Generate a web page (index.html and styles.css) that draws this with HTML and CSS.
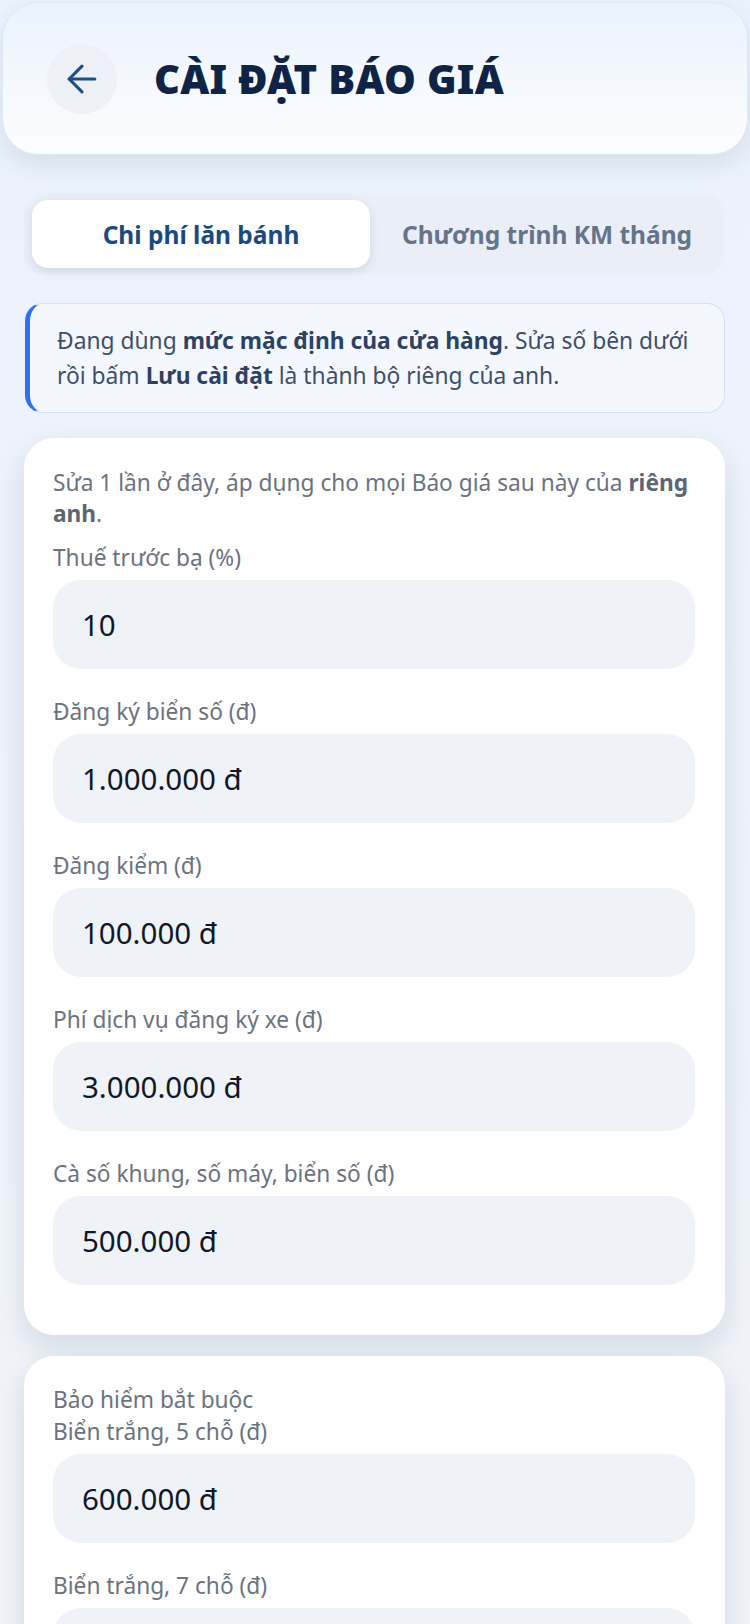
FILE: index.html
```html
<!DOCTYPE html>
<html lang="vi">
<head>
<meta charset="utf-8">
<meta name="viewport" content="width=750">
<title>Cài đặt báo giá</title>
<link rel="stylesheet" href="styles.css">
</head>
<body>
<header class="topbar">
  <button class="back" aria-label="Quay lại">
    <svg viewBox="0 0 24 24" width="44" height="44" fill="none" stroke="currentColor" stroke-width="1.7" stroke-linecap="round" stroke-linejoin="round"><path d="m12 19-7-7 7-7"/><path d="M19 12H5"/></svg>
  </button>
  <h1 class="title">CÀI ĐẶT BÁO GIÁ</h1>
</header>
<main class="content">
  <div class="tabs">
    <button class="tab active">Chi phí lăn bánh</button>
    <button class="tab">Chương trình KM tháng</button>
  </div>
  <div class="notice">
    Đang dùng <b>mức mặc định của cửa hàng</b>. Sửa số bên dưới rồi bấm <b>Lưu cài đặt</b> là thành bộ riêng của anh.
  </div>
  <section class="card card-first">
    <p class="hint">Sửa 1 lần ở đây, áp dụng cho mọi Báo giá sau này của <b>riêng anh</b>.</p>
    <div class="field"><label class="label">Thuế trước bạ (%)</label><div class="input">10</div></div>
    <div class="field"><label class="label">Đăng ký biển số (đ)</label><div class="input">1.000.000 đ</div></div>
    <div class="field"><label class="label">Đăng kiểm (đ)</label><div class="input">100.000 đ</div></div>
    <div class="field"><label class="label">Phí dịch vụ đăng ký xe (đ)</label><div class="input">3.000.000 đ</div></div>
    <div class="field"><label class="label">Cà số khung, số máy, biển số (đ)</label><div class="input">500.000 đ</div></div>
  </section>
  <section class="card">
    <div class="field"><label class="label">Bảo hiểm bắt buộc<br>Biển trắng, 5 chỗ (đ)</label><div class="input">600.000 đ</div></div>
    <div class="field"><label class="label">Biển trắng, 7 chỗ (đ)</label><div class="input">900.000 đ</div></div>
  </section>
</main>
</body>
</html>
```
FILE: styles.css
```css
* { box-sizing: border-box; }
html, body { margin: 0; padding: 0; }
body {
  font-family: "Noto Sans", "Open Sans", sans-serif;
  background: linear-gradient(180deg, #ebf2fc 0%, #eef3fa 40%, #f0f3f8 100%);
  min-height: 1624px;
  color: #111827;
}
.topbar {
  margin: 2px 2px 0;
  height: 153px;
  border-radius: 36px;
  background: linear-gradient(180deg, #eaf2fd 0%, #f6f9fe 60%, #fcfdff 100%);
  border: 1px solid #dde6f2;
  box-shadow: 0 10px 24px rgba(30, 60, 110, 0.10);
  display: flex;
  align-items: center;
  padding: 0 0 0 44px;
  gap: 37px;
}
.back {
  width: 70px;
  height: 70px;
  border-radius: 50%;
  border: 0;
  background: #edf1f7;
  color: #1d4f85;
  display: flex;
  align-items: center;
  justify-content: center;
  padding: 0;
  margin-top: 1px;
}
.title {
  margin: 0;
  font-size: 40px;
  font-weight: 900;
  color: #0f2444;
  letter-spacing: 0.3px;
}
.content {
  padding: 38px 25px 0 24px;
}
.tabs {
  display: grid;
  grid-template-columns: 1fr 1fr;
  gap: 8px;
  padding: 7px 8px;
  border-radius: 20px;
  background: #eaeff7;
  margin-right: 1px;
}
.tab {
  height: 68px;
  border: 0;
  border-radius: 16px;
  background: transparent;
  font-family: inherit;
  font-size: 24.5px;
  font-weight: 700;
  color: #64748b;
}
.tab.active {
  background: #ffffff;
  color: #1a4a7e;
  box-shadow: 0 3px 10px rgba(30, 50, 90, 0.12);
}
.notice {
  margin-top: 28px;
  margin-left: 1px;
  border: 1px solid #d3e0f4;
  border-left: 5px solid #2f6ff2;
  border-radius: 18px;
  background: #f4f7fd;
  padding: 19px 20px 19px 27px;
  font-size: 22.8px;
  line-height: 35px;
  color: #3d4f6b;
}
.notice b { color: #2c4263; font-weight: 700; }
.card {
  background: #ffffff;
  border-radius: 30px;
  padding: 28px 30px 50px 29px;
  box-shadow: 0 12px 30px rgba(20, 40, 80, 0.12);
  margin-top: 21px;
}
.card-first {
  margin-top: 25px;
  padding-top: 29px;
}
.hint {
  margin: 0 0 13px;
  font-size: 22.7px;
  line-height: 31px;
  color: #6b7280;
}
.hint b { color: #5d6573; }
.field + .field { margin-top: 27px; }
.label {
  display: block;
  font-size: 22.7px;
  line-height: 32px;
  color: #6b7280;
  margin-bottom: 6px;
}
.input {
  height: 89px;
  border-radius: 28px;
  background: #eff2f7;
  display: flex;
  align-items: center;
  padding-left: 29px;
  font-size: 29.5px;
  color: #111827;
}
```
